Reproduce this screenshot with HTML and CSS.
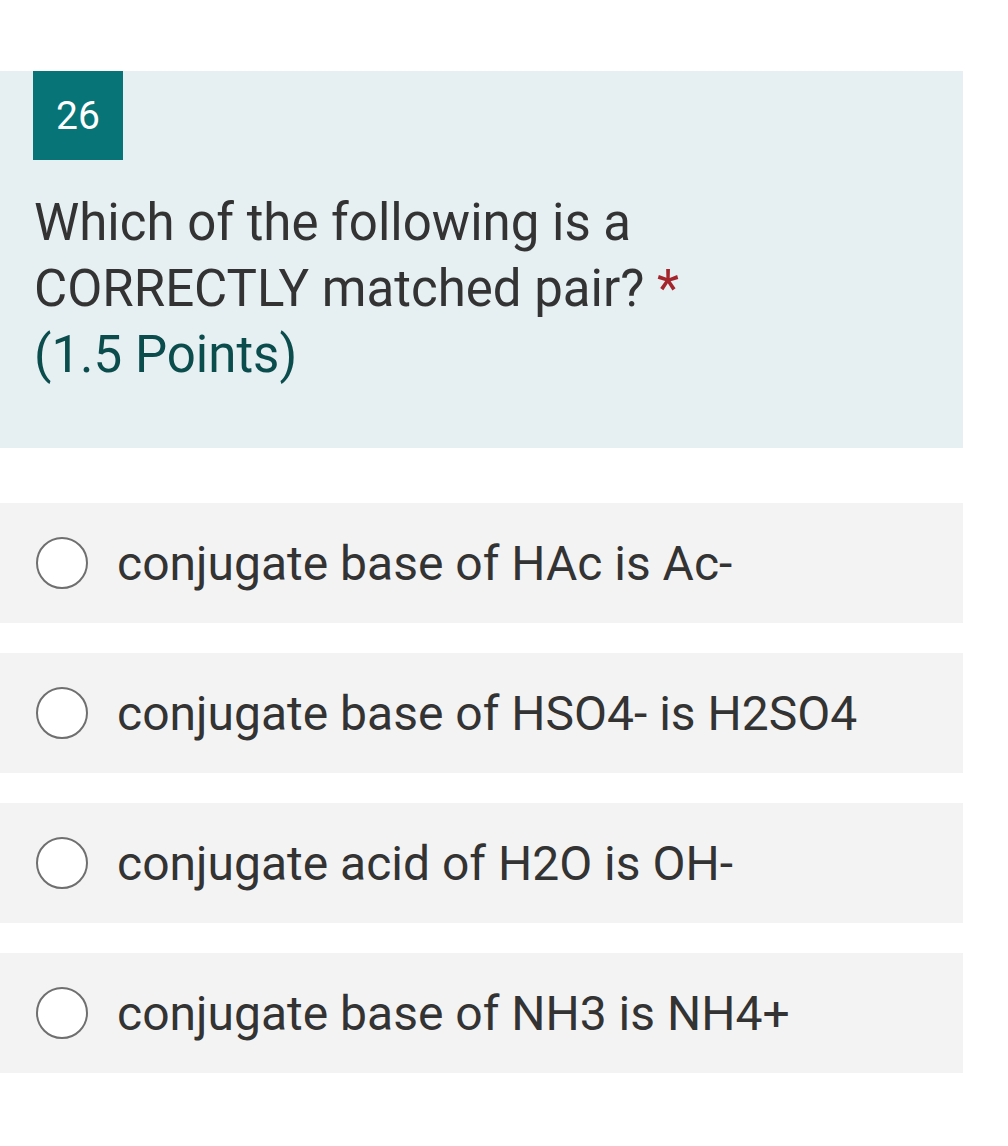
FILE: index.html
```html
<!DOCTYPE html>
<html>
<head>
<meta charset="utf-8">
<link rel="stylesheet" href="styles.css">
</head>
<body>
<div class="page">
  <section class="question">
    <div class="badge">26</div>
    <div class="qtext">Which of the following is a CORRECTLY matched pair? <span class="req">*</span><br><span class="points">(1.5 Points)</span></div>
  </section>
  <div class="options">
    <div class="option"><span class="radio"></span><span class="label">conjugate base of HAc is Ac-</span></div>
    <div class="option"><span class="radio"></span><span class="label">conjugate base of HSO4- is H2SO4</span></div>
    <div class="option"><span class="radio"></span><span class="label">conjugate acid of H2O is OH-</span></div>
    <div class="option"><span class="radio"></span><span class="label">conjugate base of NH3 is NH4+</span></div>
  </div>
</div>
</body>
</html>
```
FILE: styles.css
```css
html, body {
  margin: 0;
  padding: 0;
  background: #ffffff;
}
body {
  font-family: Roboto, "Liberation Sans", sans-serif;
  color: #333333;
}
.page {
  width: 963px;
  padding-top: 71px;
}
.question {
  background: #e6eff2;
  padding: 0 0 0 33px;
  height: 377px;
  box-sizing: border-box;
}
.badge {
  width: 90px;
  height: 89px;
  background: #077478;
  color: #ffffff;
  font-size: 39px;
  display: flex;
  align-items: center;
  justify-content: center;
}
.qtext {
  margin-top: 30px;
  padding-left: 1px;
  width: 660px;
  font-size: 51px;
  line-height: 66px;
  color: #333333;
}
.req {
  color: #a4262c;
}
.points {
  color: #0b4d4d;
}
.options {
  margin-top: 55px;
  display: flex;
  flex-direction: column;
  gap: 30px;
}
.option {
  height: 120px;
  background: #f3f3f3;
  display: flex;
  align-items: center;
  padding-left: 36px;
}
.radio {
  width: 48px;
  height: 48px;
  border: 2.5px solid #6f6f6f;
  border-radius: 50%;
  background: #ffffff;
  flex: none;
}
.label {
  margin-left: 29px;
  font-size: 48px;
  color: #333333;
}
```
